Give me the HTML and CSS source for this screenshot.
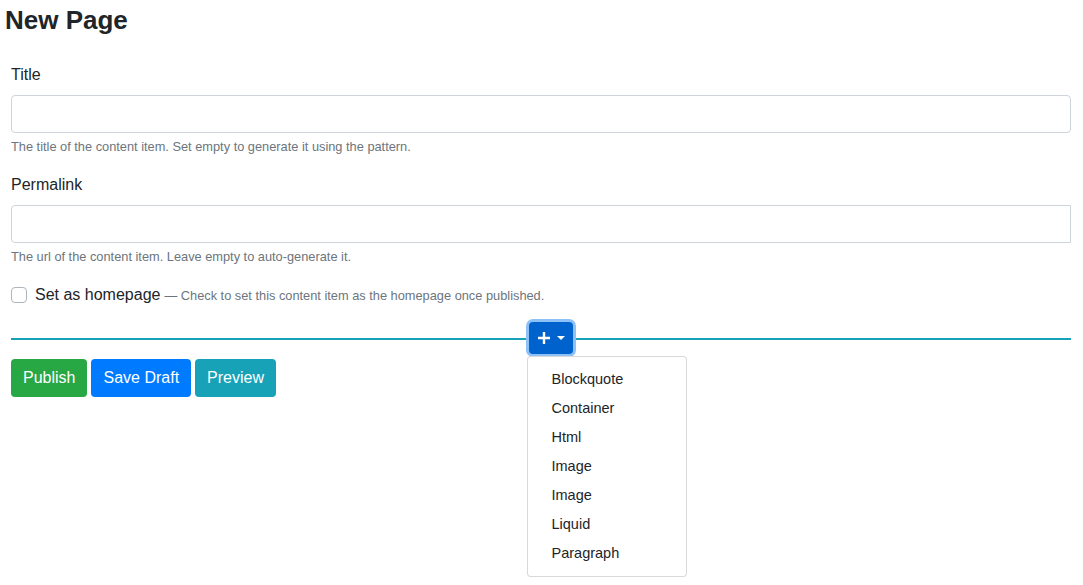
FILE: index.html
```html
<!DOCTYPE html>
<html lang="en">
<head>
    <meta charset="UTF-8">
    <title>New Page</title>
    <link rel="stylesheet" href="styles.css">
</head>
<body>
    <h1 class="page-title">New Page</h1>

    <form class="edit-form">
        <div class="form-group">
            <label class="field-label" for="title">Title</label>
            <input class="form-control" type="text" id="title">
            <small class="help">The title of the content item. Set empty to generate it using the pattern.</small>
        </div>

        <div class="form-group">
            <label class="field-label" for="permalink">Permalink</label>
            <input class="form-control square-right" type="text" id="permalink">
            <small class="help">The url of the content item. Leave empty to auto-generate it.</small>
        </div>

        <div class="form-check">
            <input type="checkbox" id="homepage" class="check-box">
            <label for="homepage" class="check-label">Set as homepage</label>
            <span class="check-hint">&mdash; Check to set this content item as the homepage once published.</span>
        </div>

        <!-- widget insert line -->
        <div class="insert-line">
            <div class="insert-wrap">
                <button type="button" class="insert-btn">
                    <svg width="14" height="14" viewBox="0 0 14 14"><path d="M7 1v12M1 7h12" stroke="#fff" stroke-width="2.4" fill="none"/></svg>
                    <span class="caret"></span>
                </button>
                <ul class="insert-menu">
                    <li>Blockquote</li>
                    <li>Container</li>
                    <li>Html</li>
                    <li>Image</li>
                    <li>Image</li>
                    <li>Liquid</li>
                    <li>Paragraph</li>
                </ul>
            </div>
        </div>

        <div class="actions">
            <button type="button" class="btn btn-publish">Publish</button>
            <button type="button" class="btn btn-draft">Save Draft</button>
            <button type="button" class="btn btn-preview">Preview</button>
        </div>
    </form>
</body>
</html>
```

FILE: styles.css
```css
html, body {
    min-height: 100%;
}

body {
    margin: 0;
    min-height: 585px;
    background-color: #fff;
    color: #212529;
    font-family: "Segoe UI", "Liberation Sans", Arial, sans-serif;
    font-size: 16px;
    line-height: 1.5;
}

.page-title {
    font-size: 26px;
    font-weight: bold;
    line-height: 34px;
    margin: 3px 0 0 5px;
}

.edit-form {
    padding: 0 12px 0 11px;
    margin-top: 26px;
}

.form-group {
    margin-bottom: 17px;
}

.field-label {
    display: block;
    margin-bottom: 8px;
}

.form-control {
    display: block;
    width: 100%;
    height: 38px;
    box-sizing: border-box;
    border: 1px solid #ced4da;
    border-radius: 4px;
    padding: 6px 12px;
    font: inherit;
}

.square-right {
    border-top-right-radius: 0;
    border-bottom-right-radius: 0;
}

.help {
    display: block;
    margin-top: 4px;
    font-size: 12.8px;
    color: #6c757d;
}

/* checkbox row */
.form-check {
    display: flex;
    align-items: center;
    height: 24px;
    margin-top: 17px;
}

.check-box {
    appearance: none;
    width: 16px;
    height: 16px;
    margin: 0 8px 0 0;
    border: 1px solid #adb5bd;
    border-radius: 4px;
    background: #fff;
}

.check-label {
    margin-right: 4px;
}

.check-hint {
    font-size: 12.8px;
    color: #6c757d;
}

/* insert widget line */
.insert-line {
    margin-top: 13px;
    height: 36px;
    display: flex;
    justify-content: center;
    align-items: center;
    background: linear-gradient(#17a2b8, #17a2b8) 0 18px / 100% 2px no-repeat;
}

.insert-wrap {
    position: relative;
    margin-left: 19px;
}

.insert-btn {
    display: flex;
    align-items: center;
    gap: 6px;
    height: 32px;
    padding: 0 8px;
    border: none;
    border-radius: 4px;
    background-color: #0062cc;
    box-shadow: 0 0 0 3px #8fc1f9;
    cursor: pointer;
}

.caret {
    width: 0;
    height: 0;
    border-left: 4px solid transparent;
    border-right: 4px solid transparent;
    border-top: 4px solid #fff;
}

.insert-menu {
    position: absolute;
    top: 34px;
    left: -2px;
    width: 160px;
    box-sizing: border-box;
    margin: 0;
    padding: 8px 0;
    list-style: none;
    background: #fff;
    border: 1px solid rgba(0, 0, 0, 0.15);
    border-radius: 4px;
    z-index: 2;
}

.insert-menu li {
    padding: 2px 24px;
    line-height: 25px;
    font-size: 14.5px;
    color: #212529;
}

/* buttons */
.actions {
    display: flex;
    gap: 4px;
    margin-top: 3px;
}

.btn {
    height: 38px;
    padding: 6px 12px;
    border: none;
    border-radius: 4px;
    color: #fff;
    font: inherit;
    cursor: pointer;
}

.btn-publish {
    background-color: #28a745;
}

.btn-draft {
    background-color: #007bff;
}

.btn-preview {
    background-color: #17a2b8;
}
```
